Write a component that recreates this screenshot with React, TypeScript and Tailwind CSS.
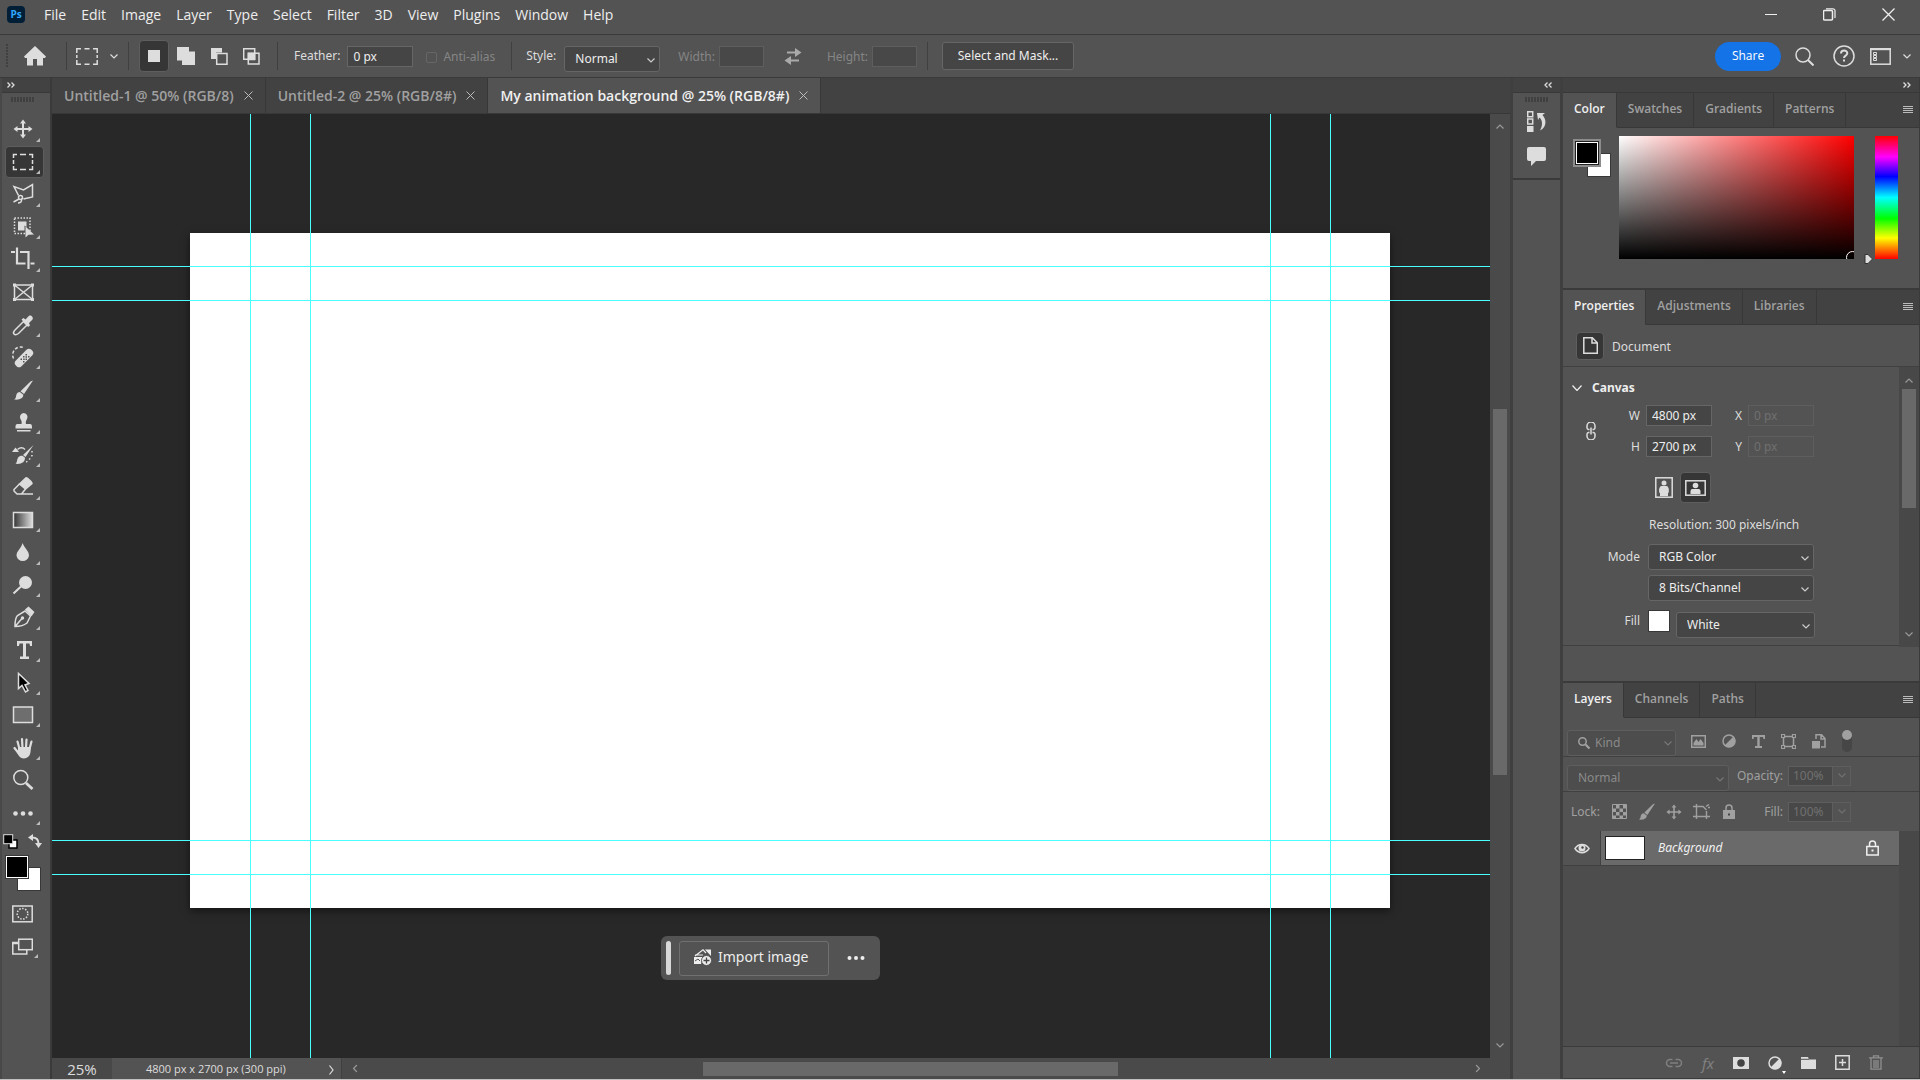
import { useState } from "react";
import type { ReactNode } from "react";

interface IconProps {
    w?: number;
    h?: number;
    className?: string;
    children: ReactNode;
}

const Icon = ({ w = 24, h = 24, className = "", children }: IconProps) => (
    <svg width={w} height={h} viewBox={`0 0 ${w} ${h}`} fill="none" stroke="currentColor" strokeWidth="1.5" aria-hidden="true" className={`shrink-0 ${className}`}>
        {children}
    </svg>
);

const Chevron = ({ className = "" }: { className?: string }) => (
    <Icon w={8} h={5} className={className}>
        <path d="M.5 .5 4 4 7.500 .5" strokeWidth="1.2" />
    </Icon>
);

const moveShape = (
    <g fill="currentColor" stroke="none">
        <path d="M11 5h2v14h-2zM5 11h14v2H5z" />
        <path d="M12 2.500 15 6.500H9zM12 21.500 9 17.500h6zM2.500 12l4-3v6zM21.500 12l-4-3v6z" />
    </g>
);

const brushShape = (
    <g fill="currentColor" stroke="none">
        <path d="M22 2.500 13 16 9.500 13.200 19.500 3.500z" />
        <path d="M8.800 14l3.500 2.800c.2 3.200-3.500 5.500-9.300 4.700 2-1 1.800-2.500 2.300-4.500.4-1.800 2-3 3.500-3z" />
    </g>
);

interface Tool {
    name: string;
    icon: ReactNode;
    more?: boolean;
}

const tools: Tool[] = [
    { name: "Move", more: true, icon: moveShape },
    { name: "Rectangular Marquee", more: true, icon: <path d="M2.500 8V4.500H6M9 4.500h6M18 4.500h3.500V8M21.500 10v4M21.500 16v3.500H18M15 19.500H9M6 19.500H2.500V16M2.500 14v-4" /> },
    {
        name: "Polygonal Lasso", more: true, icon: (
            <>
                <path d="M7.500 13.500 3 4.500 12.500 8 21.500 2.500V15L12.500 17" />
                <circle cx="9.500" cy="15.500" r="2" />
                <path d="M8 17 2.500 20M10 17.500 12 16M10.500 17.500C11 20 9 21 7 21" />
            </>
        )
    },
    {
        name: "Object Selection", more: true, icon: (
            <>
                <rect x="3.500" y="3" width="15.500" height="15.500" strokeDasharray="1.500 1.500" />
                <path d="M7 6.500h8.500V12l-2-1.500v5H7z" fill="currentColor" stroke="none" />
                <path d="M14.500 11.500v11l3-2.700 5.500-.3z" fill="currentColor" stroke="none" />
            </>
        )
    },
    { name: "Crop", more: true, icon: <path d="M0 5h4M9 5h8.500v17M6 .5v16h8.500M19.500 16.500H23.500" strokeWidth="2.200" /> },
    {
        name: "Frame", icon: (
            <>
                <rect x="3.500" y="5" width="18" height="14.500" />
                <path d="m3.500 5 18 14.500M21.500 5l-18 14.500" />
                <path d="M2 3.500h3v3H2zM20 3.500h3v3h-3zM2 18h3v3H2zM20 18h3v3h-3z" fill="currentColor" stroke="none" />
            </>
        )
    },
    {
        name: "Eyedropper", more: true, icon: (
            <>
                <path d="m12.500 8.500 3.500 3.500-8.500 8.500c-1.500 1-3.500 1.500-4.500.5s0-3 1-4z" />
                <path d="m10.500 6.500 2-1.500 2 1.500 3.500-3.700c1.500-1.300 5 1.200 3.500 3.700L18 10l1 2.500-2 1.500z" fill="currentColor" stroke="none" />
            </>
        )
    },
    {
        name: "Spot Healing Brush", more: true, icon: (
            <>
                <path d="M2.500 13.500A8 8 0 0 1 12.500 2.500" strokeDasharray="3 2" />
                <rect x="2" y="9" width="22" height="8" rx="3.500" transform="rotate(-45 13 13)" fill="currentColor" stroke="none" />
                <path d="M9.500 13.500h1.500v1.500h-1.500zM12 16h1.500v1.500H12zM12 11h1.500v1.500H12zM12.200 13.500h1.500v1.500h-1.500zM14.500 13.500h1.500v1.500h-1.500zM14.500 9h1.500v1.500h-1.500zM14.500 11.200h1.500v1.500h-1.500zM17 11h1.500v1.500H17z" fill="#535353" stroke="none" />
            </>
        )
    },
    { name: "Brush", more: true, icon: brushShape },
    {
        name: "Clone Stamp", more: true, icon: (
            <path d="M12.500 3a4 4 0 0 1 3.500 6c-1 1.500-1.500 3-1 5h4c1.500 0 2 1 2 3v1.500H4.500V17c0-2 .5-3 2-3h4c.5-2 0-3.500-1-5a4 4 0 0 1 3-6zM6 20h13.500v1.500H6z" fill="currentColor" stroke="none" />
        )
    },
    {
        name: "History Brush", more: true, icon: (
            <>
                <path d="M22.500 2 14.500 14l-2.500-2zM11.500 12.800l2.500 2c0 4-3 6.700-9.500 6 2-1.500 1-3.500 2.500-6 1-1.700 3-2.200 4.500-2zM4.500 4.500 8 9H1z" fill="currentColor" stroke="none" />
                <path d="M6.500 6.500C9 4.500 12 4.500 14 6.500" />
                <path d="M21 8v4.500L18 17l-4 3" strokeDasharray="1.500 2.500" />
            </>
        )
    },
    {
        name: "Eraser", more: true, icon: (
            <>
                <path d="m8.500 9 6.500-6.200c.8-.6 6.300 4.500 6 5.700L14.500 14z" fill="currentColor" />
                <path d="M8.500 9 3 14.500v1.500l3 3h4.500l4-5M6 19h16" />
            </>
        )
    },
    {
        name: "Gradient", more: true, icon: (
            <>
                <linearGradient id="toolGradient">
                    <stop offset="0" stopColor="#333" />
                    <stop offset="1" stopColor="#ddd" />
                </linearGradient>
                <rect x="2.500" y="4.500" width="19" height="15" fill="url(#toolGradient)" />
            </>
        )
    },
    { name: "Blur", more: true, icon: <path d="M11.500 3c2 5 6.500 8 6.500 12.500a6.300 6.300 0 0 1-12.500 0C5.500 11 10.500 8 11.500 3z" fill="currentColor" stroke="none" /> },
    {
        name: "Dodge", more: true, icon: (
            <>
                <circle cx="14.500" cy="9.500" r="6.500" fill="currentColor" stroke="none" />
                <path d="m2.500 20.500 7.500-7" strokeWidth="2" />
            </>
        )
    },
    {
        name: "Pen", more: true, icon: (
            <>
                <path d="M4 21.500c0-4 .5-9 2.500-11L14 6l5.500 5-3.500 7c-3 2.500-8 3.500-12 3.500zM4 21.500l7-8" />
                <circle cx="11.500" cy="13" r="1.700" fill="currentColor" stroke="none" />
                <path d="M15 4.500 17.500 2.500l5 4.500-2 3z" fill="currentColor" />
            </>
        )
    },
    { name: "Horizontal Type", more: true, icon: <path d="M6 3h15v5h-2l-.5-2.500h-3.500v13h3V21h-9v-2.500h3v-13H8.500L8 8H6z" fill="currentColor" stroke="none" /> },
    { name: "Path Selection", more: true, icon: <path d="M7.500 2.500v15l3.500-3 3.500 6.500 2.500-1.500-3-5.500 4-1.500z" fill="#000" /> },
    { name: "Rectangle", more: true, icon: <rect x="2.500" y="4" width="19" height="15.500" fill="#6e6e6e" /> },
    {
        name: "Hand", more: true, icon: (
            <>
                <path d="M8.500 13 6.500 5.500M11.500 12 11 3M15 12l.5-8.500M18.500 13l2-7.500M7.500 17 3.500 12" strokeWidth="2.200" strokeLinecap="round" />
                <path d="M7 11h12.500c.5 4 .5 11-6.500 11.500C8 22 7.500 19 5 15l2-1z" fill="currentColor" stroke="none" />
            </>
        )
    },
    {
        name: "Zoom", icon: (
            <>
                <circle cx="9.800" cy="9.500" r="7" />
                <path d="m15 15 6.500 6" strokeWidth="2.800" />
            </>
        )
    },
    {
        name: "Edit Toolbar", more: true, icon: (
            <g fill="currentColor" stroke="none">
                <circle cx="4.500" cy="12.500" r="2.300" />
                <circle cx="12" cy="12.500" r="2.300" />
                <circle cx="19.500" cy="12.500" r="2.300" />
            </g>
        )
    },
];

const menus = ["File", "Edit", "Image", "Layer", "Type", "Select", "Filter", "3D", "View", "Plugins", "Window", "Help"];
const documents = ["Untitled-1 @ 50% (RGB/8)", "Untitled-2 @ 25% (RGB/8#)", "My animation background @ 25% (RGB/8#)"];

const Divider = ({ className = "" }: { className?: string }) => <div className={`w-px h-7 bg-[#404040] shrink-0 ${className}`} />;

const Grip = () => (
    <div className="w-6 h-[5px] bg-[repeating-linear-gradient(90deg,#404040_0_2px,#535353_2px_3px)]" />
);

const MoreMark = () => (
    <svg width="4" height="4" viewBox="0 0 4 4" aria-hidden="true" className="absolute right-[3px] bottom-[3px]">
        <path d="M4 0v4H0z" fill="#bbb" />
    </svg>
);

interface SelectProps {
    id: string;
    value: string;
    label: string;
    className?: string;
    disabled?: boolean;
}

const Select = ({ id, value, label, className = "", disabled }: SelectProps) => (
    <div className={`relative ${className}`}>
        <select
            id={id}
            aria-label={label}
            disabled={disabled}
            className={`${disabled ? "bg-[#4d4d4d] border-[#5e5e5e] text-[#8a8a8a]" : "bg-[#454545] border-[#666] text-[#eee]"} appearance-none w-full h-full border rounded-[3px] px-[10px] opacity-100`}>
            <option>{value}</option>
        </select>
        <Chevron className={`${disabled ? "text-[#777]" : "text-[#ccc]"} absolute right-[5px] top-3 pointer-events-none`} />
    </div>
);

const PanelTabs = ({ names }: { names: string[] }) => {
    const [active, setActive] = useState(names[0]);

    return (
        <div className="flex h-[35px] shrink-0 bg-[#424242] font-['Open_Sans',sans-serif] font-semibold text-xs">
            {names.map((name) => (
                <button
                    key={name}
                    onClick={() => setActive(name)}
                    className={`${active === name ? "bg-[#535353] text-[#f0f0f0] border-b-[#535353]" : "text-[#a0a0a0] border-b-[#383838]"} px-[11px] pb-[2px] border-r border-b border-r-[#383838]`}>
                    {name}
                </button>
            ))}
            <div className="flex-1 flex items-center justify-end pr-[6px] border-b border-[#383838]">
                <button aria-label="Panel menu">
                    <Icon w={10} h={8} className="text-[#bbb]">
                        <path d="M0 .5h10M0 2.500h10M0 4.500h10M0 6.500h10" strokeWidth="1" />
                    </Icon>
                </button>
            </div>
        </div>
    );
};

const MenuBar = () => (
    <header className="flex items-center h-[35px] shrink-0 border-b border-[#3a3a3a] pl-[7px] font-['Open_Sans',sans-serif] text-sm text-[#eee]">
        <div className="w-[18px] h-[17px] mb-[5px] rounded-sm bg-[#001e36] text-[#31a8ff] text-[10px] font-bold flex items-center justify-center">Ps</div>
        <nav className="flex gap-[15px] ml-[19px] mb-[5px]">
            {menus.map((menu) => (
                <button key={menu}>{menu}</button>
            ))}
        </nav>
        <div className="flex items-center gap-[46px] ml-auto mr-[25px] mb-[5px]">
            <button aria-label="Minimize"><Icon w={12} h={13}><path d="M0 6.500h12" strokeWidth="1" /></Icon></button>
            <button aria-label="Restore">
                <Icon w={13} h={13}>
                    <rect x=".5" y="2.500" width="9" height="9.500" rx="1" />
                    <path d="M3 .8h7a2 2 0 0 1 2 2V10" strokeWidth="1.200" />
                </Icon>
            </button>
            <button aria-label="Close"><Icon w={13} h={13}><path d="m.5.5 12 12M12.500.5l-12 12" strokeWidth="1.300" /></Icon></button>
        </div>
    </header>
);

const OptionsBar = () => (
    <div className="flex items-center h-[43px] shrink-0 border-b border-[#3a3a3a] text-xs text-[#ddd] pl-[6px] pr-[9px]">
        <div className="w-[2px] h-6 bg-[repeating-linear-gradient(#404040_0_2px,#535353_2px_3px)]" />
        <button aria-label="Home" className="ml-4">
            <Icon w={22} h={20}>
                <path d="M11 0 0 10.500 1 12h2v7.500h6V13h4v6.500h6V12h2l1-1.500z" fill="currentColor" stroke="none" />
            </Icon>
        </button>
        <Divider className="ml-5" />
        <button aria-label="Tool preset" className="flex items-center gap-3 ml-[9px]">
            <Icon w={22} h={17}>
                <path d="M.8 5V.8H5M8.500.8h5M17 .8h4.200V5M21.200 7v3M21.200 12v4.200H17M13.500 16.200h-5M5 16.200H.8V12M.8 10V7" />
            </Icon>
            <Chevron />
        </button>
        <Divider className="ml-[10px]" />
        <div className="flex items-center ml-[10px]">
            <button aria-label="New selection" className="w-[30px] h-8 flex items-center justify-center rounded-sm bg-[#363636] border border-[#5e5e5e]">
                <Icon w={12} h={12}><path d="M0 0h12v12H0z" fill="currentColor" stroke="none" /></Icon>
            </button>
            <button aria-label="Add to selection" className="ml-2">
                <Icon w={18} h={18}><path d="M0 0h12v4.500h6V18H5v-4.500H0z" fill="currentColor" stroke="none" /></Icon>
            </button>
            <button aria-label="Subtract from selection" className="ml-4">
                <Icon w={17} h={17}><path d="M0 0h11v4.500H5V11H0z" fill="currentColor" stroke="none" /><path d="M5.700 5.500H16v10.700H5.700z" /></Icon>
            </button>
            <button aria-label="Intersect with selection" className="ml-[15px]">
                <Icon w={17} h={17}><path d="M.7.7h11v10.600H.7zM5.300 5.300H16V16H5.300z" /><path d="M5.500 5.500h6v6h-6z" fill="currentColor" /></Icon>
            </button>
        </div>
        <Divider className="ml-[17px]" />
        <label htmlFor="feather" className="ml-4">Feather:</label>
        <input id="feather" defaultValue="0 px" className="w-[66px] h-[21px] ml-[7px] px-[5px] bg-[#454545] border border-[#666] text-[#eee]" />
        <label className="flex items-center gap-[6px] ml-[13px] pt-[2px] text-[#858585]">
            <input type="checkbox" disabled className="appearance-none size-[11px] border border-[#666] rounded-xs" />
            Anti-alias
        </label>
        <Divider className="ml-4" />
        <label htmlFor="style" className="ml-[14px]">Style:</label>
        <Select id="style" label="Style" value="Normal" className="w-24 h-[26px] ml-2 mt-[6px]" />
        <label htmlFor="width" className="ml-[18px] pt-[2px] text-[#858585]">Width:</label>
        <input id="width" disabled className="w-[45px] h-[21px] ml-1 bg-[#484848] border border-[#5e5e5e]" />
        <button aria-label="Swap width and height" className="ml-5 text-[#aaa]">
            <Icon w={18} h={17}>
                <path d="M3 4.500h9M6 12.500h9" strokeWidth="2" />
                <path d="m11 0 6.500 4.500L11 9zM7 8 .5 12.500 7 17z" fill="currentColor" stroke="none" />
            </Icon>
        </button>
        <label htmlFor="height" className="ml-[25px] pt-[2px] text-[#858585]">Height:</label>
        <input id="height" disabled className="w-[45px] h-[21px] ml-1 bg-[#484848] border border-[#5e5e5e]" />
        <Divider className="ml-[10px]" />
        <button className="w-[132px] h-7 ml-[14px] rounded-[3px] bg-[#454545] border border-[#666] text-[#eee]">Select and Mask...</button>
        <div className="flex items-center ml-auto">
            <button className="w-[66px] h-[29px] rounded-full bg-[#1473e6] text-white font-['Open_Sans',sans-serif]">Share</button>
            <button aria-label="Search" className="ml-[14px]">
                <Icon w={19} h={19}><circle cx="8" cy="8" r="7" /><path d="m13 13 5.500 5.500" strokeWidth="2" /></Icon>
            </button>
            <button aria-label="Help" className="ml-[19px]">
                <Icon w={22} h={22}>
                    <circle cx="11" cy="11" r="10" />
                    <path d="M8 8.500c0-4 6.300-3.800 6.300-.2C14.300 10.500 11 10.700 11 13" strokeWidth="2" />
                    <path d="M10 14.500h2v2h-2z" fill="currentColor" stroke="none" />
                </Icon>
            </button>
            <button aria-label="Workspace" className="flex items-center gap-3 ml-[15px]">
                <Icon w={21} h={17}>
                    <rect x=".8" y=".8" width="19.400" height="15.400" />
                    <path d="M0 1.200h21" strokeWidth="2" />
                    <path d="M3.500 4.500h3v2h-3zM3.500 7.500h3v2h-3zM3.500 10.500h3v2h-3z" strokeWidth="1" />
                </Icon>
                <Chevron />
            </button>
        </div>
    </div>
);

const DoubleArrow = ({ left }: { left?: boolean }) => (
    <Icon w={8} h={6} className={left ? "rotate-180" : ""}>
        <path d="m.5.5 2.500 2.500L.5 5.500M4.500.5 7 3 4.500 5.500" strokeWidth="1.300" />
    </Icon>
);

const Toolbar = () => {
    const [active, setActive] = useState("Rectangular Marquee");

    return (
        <aside className="flex flex-col w-[52px] shrink-0 border-x-2 border-l-[#484848] border-r-[#3a3a3a]">
            <button aria-label="Expand toolbar" className="h-[15px] pl-[5px] flex items-center bg-[#424242] border-b border-[#383838]">
                <DoubleArrow />
            </button>
            <div className="pt-1 pb-[11px] pl-[9px]"><Grip /></div>
            <div className="flex flex-col h-[716px] pl-[3px]">
                {tools.map((tool) => (
                    <button
                        key={tool.name}
                        aria-label={tool.name}
                        onClick={() => setActive(tool.name)}
                        className={`${active === tool.name ? "bg-[#363636] border-[#5e5e5e]" : "border-transparent"} relative flex-1 w-[39px] pl-[5px] flex items-center border rounded-sm`}>
                        <Icon>{tool.icon}</Icon>
                        {tool.more && <MoreMark />}
                    </button>
                ))}
            </div>
            <div className="flex items-start justify-between pl-[1px] pr-[8px] pt-[5px] h-[26px]">
                <button aria-label="Default colors">
                    <Icon w={15} h={15}>
                        <rect x="6" y="6" width="8" height="8" fill="#fff" stroke="#000" />
                        <rect x=".7" y=".7" width="9" height="9" fill="#000" strokeWidth="1" />
                    </Icon>
                </button>
                <button aria-label="Switch colors">
                    <Icon w={14} h={14}>
                        <path d="M4 3.500c5 0 6.500 2 6.500 6" strokeWidth="2" />
                        <path d="M0 3.500 5 0v7zM7 9h7l-3.500 5z" fill="currentColor" stroke="none" />
                    </Icon>
                </button>
            </div>
            <div className="grid w-[37px] ml-[3px]">
                <button aria-label="Background color" className="[grid-area:1/1] ml-[12px] mt-[12px] size-6 bg-white border border-[#383838]" />
                <button aria-label="Foreground color" className="[grid-area:1/1] size-6 bg-black border border-[#383838] ring-1 ring-inset ring-white" />
            </div>
            <button aria-label="Quick mask" className="ml-[10px] mt-[14px]">
                <Icon w={21} h={18}>
                    <rect x=".8" y="1" width="19.400" height="15.800" />
                    <circle cx="10.500" cy="8.800" r="5.300" strokeDasharray="1.500 1.500" />
                </Icon>
            </button>
            <button aria-label="Screen mode" className="relative w-[29px] pl-[10px] box-content mt-[15px] pb-[6px]">
                <Icon w={21} h={17}>
                    <path d="M6 5H.8v11h14v-4" />
                    <path d="M0 5h6" strokeWidth="2.500" />
                    <rect x="6.700" y="1.200" width="13.600" height="10.500" />
                </Icon>
                <MoreMark />
            </button>
        </aside>
    );
};

const DocumentTabs = () => {
    const [active, setActive] = useState(2);

    return (
        <div className="flex h-9 shrink-0 bg-[#424242] border-b border-[#383838] font-['Open_Sans',sans-serif] text-sm font-semibold">
            {documents.map((doc, i) => (
                <div key={doc} className={`${active === i ? "bg-[#535353] text-[#f0f0f0]" : "text-[#a0a0a0]"} flex items-center gap-[10px] px-3 border-r border-[#383838]`}>
                    <button onClick={() => setActive(i)}>{doc}</button>
                    <button aria-label={`Close ${doc}`}>
                        <Icon w={9} h={9} className="text-[#bbb]"><path d="m.5.5 8 8M8.500.5l-8 8" strokeWidth="1" /></Icon>
                    </button>
                </div>
            ))}
        </div>
    );
};

const Canvas = () => (
    <main className="relative flex-1 bg-[#282828] overflow-hidden">
        <div className="absolute left-[138px] top-[119px] w-[1200px] h-[675px] bg-white shadow-[0_3px_8px_rgba(0,0,0,0.5)]" />
        <div className="absolute inset-y-0 left-[198px] w-px bg-[#4affff]" />
        <div className="absolute inset-y-0 left-[258px] w-px bg-[#4affff]" />
        <div className="absolute inset-y-0 left-[1218px] w-px bg-[#4affff]" />
        <div className="absolute inset-y-0 left-[1278px] w-px bg-[#4affff]" />
        <div className="absolute inset-x-0 top-[152px] h-px bg-[#4affff]" />
        <div className="absolute inset-x-0 top-[186px] h-px bg-[#4affff]" />
        <div className="absolute inset-x-0 top-[726px] h-px bg-[#4affff]" />
        <div className="absolute inset-x-0 top-[760px] h-px bg-[#4affff]" />
        <div className="absolute left-[609px] top-[822px] flex items-center h-11 w-[219px] pl-[5px] rounded-md bg-[#535353] text-[#eee] text-sm">
            <div className="w-[5px] h-[34px] rounded-full bg-[#d8d8d8]" />
            <button className="flex items-center gap-[6px] w-[150px] h-[35px] ml-2 pl-[14px] pb-[2px] rounded-[3px] border border-[#707070]">
                <Icon w={18} h={17}>
                    <path d="M1 7 9 .8 12 4M1 6h8" strokeWidth="1.200" />
                    <path d="M11 .5h6v6.500zM0 8h9l-2 7H0z" fill="currentColor" stroke="none" />
                    <path d="m1 12 3-2 2 2" stroke="#535353" strokeWidth="1" />
                    <circle cx="12.500" cy="11.500" r="5" fill="currentColor" stroke="#535353" strokeWidth="1" />
                    <path d="M12.500 8.500v6M9.500 11.500h6" stroke="#444" strokeWidth="1.300" />
                </Icon>
                Import image
            </button>
            <button aria-label="More options" className="ml-[18px]">
                <Icon w={18} h={4}>
                    <g fill="currentColor" stroke="none">
                        <circle cx="2.500" cy="2" r="2" />
                        <circle cx="9" cy="2" r="2" />
                        <circle cx="15.500" cy="2" r="2" />
                    </g>
                </Icon>
            </button>
        </div>
    </main>
);

const VerticalScroll = () => (
    <div className="flex flex-col items-center w-5 shrink-0 bg-[#4a4a4a] text-[#999] py-[10px]">
        <Chevron className="rotate-180" />
        <div className="flex-1 w-full flex flex-col items-center">
            <div className="flex-[280]" />
            <div className="flex-[366] w-[14px] bg-[#696969]" />
            <div className="flex-[268]" />
        </div>
        <Chevron />
    </div>
);

const StatusBar = () => (
    <footer className="flex h-[21px] shrink-0 bg-[#4a4a4a] text-[#ddd]">
        <div className="w-[60px] bg-[#484848] flex items-center justify-center font-['Open_Sans',sans-serif] text-[15px]">25%</div>
        <button className="w-[230px] bg-[#535353] flex items-center justify-between pl-[34px] pr-[7px] pt-[2px] border-r border-[#404040] font-['Open_Sans',sans-serif] text-[11px]">
            4800 px x 2700 px (300 ppi)
            <Icon w={5} h={10}><path d="m.5.5 3.500 4.500L.5 9.500" strokeWidth="1.200" /></Icon>
        </button>
        <div className="flex-1 flex items-center pl-[9px] pr-[28px] text-[#999]">
            <Chevron className="rotate-90" />
            <div className="flex-1 flex">
                <div className="flex-[343]" />
                <div className="flex-[415] h-[14px] bg-[#696969]" />
                <div className="flex-[355]" />
            </div>
            <Chevron className="-rotate-90" />
        </div>
    </footer>
);

const Dock = () => (
    <aside className="flex flex-col w-[53px] shrink-0 border-x-3 border-[#3f3f3f]">
        <button aria-label="Expand panels" className="h-[15px] pr-2 flex items-center justify-end bg-[#424242] border-b border-[#383838]">
            <DoubleArrow left />
        </button>
        <div className="flex flex-col items-center h-[87px] pt-1 border-b-2 border-[#3a3a3a]">
            <Grip />
            <button aria-label="History" className="mt-[9px]">
                <Icon w={19} h={21}>
                    <path d="M.7.700h5v5h-5zM.7 8h5v5h-5z" />
                    <path d="M0 15h6.500v6H0zM10 2h8l-2.500 2c4.500 5 4 12-2.500 15.500 2.500-5 3-9.500-.5-13L11 9z" fill="currentColor" stroke="none" />
                </Icon>
            </button>
            <button aria-label="Comments" className="mt-[15px]">
                <Icon w={19} h={19}><path d="M2 0h15a2 2 0 0 1 2 2v10a2 2 0 0 1-2 2H9l-5 5v-5H2a2 2 0 0 1-2-2V2a2 2 0 0 1 2-2z" fill="currentColor" stroke="none" /></Icon>
            </button>
        </div>
    </aside>
);

const ColorPanel = () => (
    <section className="shrink-0 border-b-2 border-[#3a3a3a]">
        <PanelTabs names={["Color", "Swatches", "Gradients", "Patterns"]} />
        <div className="flex h-40 pl-[10px] pt-2">
            <div className="grid w-[38px] h-[38px] mt-[3px] shrink-0">
                <button aria-label="Background" className="[grid-area:1/1] ml-[14px] mt-[14px] size-6 bg-white border border-[#383838]" />
                <button aria-label="Foreground" className="[grid-area:1/1] size-7 p-[2px] bg-[#8c8c8c]">
                    <span className="block size-6 border border-[#222] bg-black ring-1 ring-inset ring-white" />
                </button>
            </div>
            <div className="relative flex-1 h-[123px] ml-2 overflow-hidden bg-[linear-gradient(to_top,#000,transparent),linear-gradient(to_right,#fff,#f00)]">
                <div className="absolute -right-[5px] -bottom-[5px] size-[13px] rounded-full border border-white" />
            </div>
            <div className="flex items-end h-[128px] w-[21px] justify-end pr-[2px]">
                <Icon w={9} h={10}><path d="M1 .5h3L8.500 5 4 9.500H1z" fill="#ddd" stroke="#333" strokeWidth="1" /></Icon>
            </div>
            <div className="w-[23px] h-[123px] mr-[21px] bg-[linear-gradient(#f00,#f0f_17%,#00f_33%,#0ff_50%,#0f0_67%,#ff0_83%,#f00)]" />
        </div>
    </section>
);

interface SizeFieldProps {
    id: string;
    label: string;
    value: string;
    disabled?: boolean;
}

const SizeField = ({ id, label, value, disabled }: SizeFieldProps) => (
    <div className="flex items-center">
        <label htmlFor={id} className="w-5 pr-[6px] text-right">{label}</label>
        <input
            id={id}
            defaultValue={value}
            disabled={disabled}
            className={`${disabled ? "border-[#5e5e5e] text-[#707070]" : "bg-[#454545] border-[#666] text-[#eee]"} w-[66px] h-[21px] px-[5px] border`}
        />
    </div>
);

const PropertiesPanel = () => (
    <section className="shrink-0 border-b-2 border-[#3a3a3a]">
        <PanelTabs names={["Properties", "Adjustments", "Libraries"]} />
        <div className="flex items-center gap-2 h-[42px] pl-[13px] border-b border-[#404040]">
            <div className="size-7 flex items-center justify-center bg-[#363636] border border-[#5e5e5e] rounded-sm">
                <Icon w={15} h={17}><path d="M.8.800h8.500l5 5v10.400H.8zM9 1v5h5" /></Icon>
            </div>
            <span className="pt-[3px]">Document</span>
        </div>
        <div className="flex h-[280px]">
            <div className="flex-1 border-b border-[#404040] h-[279px] pt-[13px]">
                <button className="flex items-center gap-[10px] pl-[9px] font-bold text-[#eee]">
                    <Icon w={10} h={6}><path d="m.5.500 4.500 5 4.500-5" strokeWidth="1.200" /></Icon>
                    Canvas
                </button>
                <div className="flex items-center mt-[9px] pl-[23px]">
                    <button aria-label="Link width and height" className="w-10">
                        <Icon w={10} h={18}>
                            <path d="M3.500 7.500H2.500A1.800 1.800 0 0 1 1 6V4a3.200 3.200 0 0 1 8 0v2a1.800 1.800 0 0 1-1.500 1.500H6.500M3.500 10.500H2.500A1.800 1.800 0 0 0 1 12v2a3.200 3.200 0 0 0 8 0v-2a1.800 1.800 0 0 0-1.500-1.500H6.500M5 5.500v7" strokeWidth="1.500" />
                        </Icon>
                    </button>
                    <div className="grid grid-cols-2 gap-x-4 gap-y-[10px]">
                        <SizeField id="doc-w" label="W" value="4800 px" />
                        <SizeField id="doc-x" label="X" value="0 px" disabled />
                        <SizeField id="doc-h" label="H" value="2700 px" />
                        <SizeField id="doc-y" label="Y" value="0 px" disabled />
                    </div>
                </div>
                <div className="flex items-center gap-[7px] pl-[92px] mt-[15px]">
                    <button aria-label="Portrait">
                        <Icon w={18} h={21}>
                            <rect x=".8" y=".8" width="16.400" height="19.400" />
                            <g fill="currentColor" stroke="none">
                                <circle cx="9" cy="6" r="2.500" />
                                <path d="M6 9h6c2.500 2 2 5 1.500 7H13v3H5v-3h-.5C4 14 3.500 11 6 9z" />
                            </g>
                        </Icon>
                    </button>
                    <button aria-label="Landscape" className="w-[31px] h-[31px] flex items-center justify-center bg-[#363636] border border-[#5e5e5e] rounded-sm">
                        <Icon w={21} h={16}>
                            <rect x=".8" y=".8" width="19.400" height="14.400" />
                            <g fill="currentColor" stroke="none">
                                <circle cx="10.500" cy="5.500" r="2.800" />
                                <path d="M5.500 14v-2.500c0-2 1-2.500 2.500-2.500h5c1.500 0 2.500.5 2.500 2.500V14z" />
                            </g>
                        </Icon>
                    </button>
                </div>
                <p className="pl-[86px] mt-[14px]">Resolution: 300 pixels/inch</p>
                <div className="flex items-center mt-[11px]">
                    <label htmlFor="mode" className="w-[77px] text-right">Mode</label>
                    <Select id="mode" label="Mode" value="RGB Color" className="w-[166px] h-[26px] ml-2" />
                </div>
                <Select id="depth" label="Bit depth" value="8 Bits/Channel" className="w-[166px] h-[26px] ml-[85px] mt-[5px]" />
                <div className="flex items-start mt-[9px]">
                    <label htmlFor="fill" className="w-[77px] pt-[3px] text-right">Fill</label>
                    <button aria-label="Fill color" className="size-[22px] ml-2 bg-white border border-[#383838]" />
                    <Select id="fill" label="Fill" value="White" className="w-[139px] h-[26px] ml-[6px] mt-[2px]" />
                </div>
            </div>
            <div className="flex flex-col items-center w-[20px] bg-[#484848] text-[#999] pt-[11px] pb-[10px]">
                <Chevron className="rotate-180" />
                <div className="w-[14px] h-[119px] mt-[6px] mb-auto bg-[#696969]" />
                <Chevron />
            </div>
        </div>
        <div className="h-[34px]" />
    </section>
);

const PercentField = ({ id, label }: { id: string; label: string }) => (
    <div className="flex items-center justify-end gap-[5px]">
        <label htmlFor={id}>{label}</label>
        <div className="flex">
            <input id={id} disabled defaultValue="100%" className="w-[45px] h-5 px-1 border border-[#5e5e5e] bg-[#484848] text-[#707070]" />
            <button aria-label={`${label} slider`} className="w-[18px] h-5 flex items-center justify-center border border-l-0 border-[#5e5e5e] text-[#707070]"><Chevron /></button>
        </div>
    </div>
);

const LayersPanel = () => (
    <section className="flex-1 flex flex-col border-b border-[#3a3a3a] text-[#a0a0a0]">
        <PanelTabs names={["Layers", "Channels", "Paths"]} />
        <div className="flex items-center h-[39px] shrink-0 pl-1 pt-3 border-b border-[#404040]">
            <div className="flex items-center relative">
                <Icon w={12} h={12} className="absolute left-[11px] z-10"><circle cx="4.500" cy="4.500" r="3.700" /><path d="m7.500 7.500 4 4" strokeWidth="2.200" /></Icon>
                <select aria-label="Filter by kind" disabled className="appearance-none w-[109px] h-[26px] pl-[27px] rounded-[3px] border border-[#5e5e5e] bg-[#4d4d4d] text-[#8a8a8a] opacity-100">
                    <option>Kind</option>
                </select>
                <Chevron className="absolute right-1 text-[#777]" />
            </div>
            <div className="flex items-center gap-4 ml-[15px] pb-1">
                <button aria-label="Pixel layers"><Icon w={15} h={13}><path d="M.7.700h13.600v11.600H.7z" /><path d="M2.500 10.500V8l3-4 2 3L9.500 4 12.500 8v2.500z" fill="currentColor" stroke="none" /></Icon></button>
                <button aria-label="Adjustment layers"><Icon w={14} h={14}><circle cx="7" cy="7" r="6" /><path d="M11.500 2.500A6.300 6.300 0 0 1 2.500 11.500z" fill="currentColor" stroke="none" /></Icon></button>
                <button aria-label="Type layers"><Icon w={13} h={13}><path d="M0 0h13v4h-1.500L11 2H7.700v9H10v2H3v-2h2.300V2H2L1.500 4H0z" fill="currentColor" stroke="none" /></Icon></button>
                <button aria-label="Shape layers"><Icon w={15} h={15}><path d="M2.500 2.500h10v10h-10z" /><path d="M.5.500h3v3h-3zM11.500.500h3v3h-3zM.5 11.500h3v3h-3zM11.500 11.500h3v3h-3z" fill="#535353" strokeWidth="1.200" /></Icon></button>
                <button aria-label="Smart objects"><Icon w={14} h={15}><path d="M4 5V.700h5.500L13 4.500V13H9M9 1v4h4" /><path d="M0 7h8v7.500H0z" fill="currentColor" stroke="none" /></Icon></button>
                <button aria-label="Toggle layer filter" className="flex items-start w-[10px] h-[22px] rounded-full bg-[#464646]"><span className="size-[10px] rounded-full bg-[#a0a0a0]" /></button>
            </div>
        </div>
        <div className="flex items-center h-[35px] shrink-0 pl-1 pt-[7px] border-b border-[#404040]">
            <Select id="blend" label="Blend mode" value="Normal" disabled className="w-[162px] h-[26px]" />
            <div className="w-[122px] pb-1"><PercentField id="opacity" label="Opacity:" /></div>
        </div>
        <div className="flex items-center h-[39px] shrink-0 pl-2">
            <span className="w-[43px]">Lock:</span>
            <div className="flex items-center gap-[11px]">
                <button aria-label="Lock transparent pixels"><Icon w={15} h={15}><path d="M.5.500h14v14H.5z" strokeWidth="1" /><path d="M4 1h3.500v3.500H4zM11 1h3.500v3.500H11zM.5 4.500H4V8H.5zM7.500 4.500H11V8H7.500zM4 8h3.500v3.500H4zM11 8h3.500v3.500H11zM.5 11.500H4V15H.5zM7.500 11.500H11V15H7.500z" fill="currentColor" stroke="none" /></Icon></button>
                <button aria-label="Lock image pixels"><svg width="17" height="17" viewBox="2 2 20 20" aria-hidden="true">{brushShape}</svg></button>
                <button aria-label="Lock position"><svg width="16" height="16" viewBox="2 2 20 20" aria-hidden="true">{moveShape}</svg></button>
                <button aria-label="Lock artboard nesting"><Icon w={17} h={15}><path d="M3.500 0v15M13.500 7v8M0 2.500h10L13.500 6M0 12.500h17M13 2.500l3-2M15 3.500h2" strokeWidth="1.400" /></Icon></button>
                <button aria-label="Lock all"><Icon w={12} h={15} className="ml-[2px]"><path d="M3 7V4a3 3 0 0 1 6 0v3" /><path d="M0 6h12v9H0z" fill="currentColor" stroke="none" /><path d="M5 9.500h2v2H5z" fill="#444" stroke="none" /></Icon></button>
            </div>
            <div className="ml-auto w-[122px] mr-[68px]"><PercentField id="fill-opacity" label="Fill:" /></div>
        </div>
        <div className="flex-1 flex bg-[#4d4d4d]">
            <div className="flex-1">
                <div className="flex h-[35px] border-b border-[#404040]">
                    <button aria-label="Layer visibility" className="w-[38px] flex items-center justify-center bg-[#535353] border-r border-[#404040] text-[#ddd]">
                        <Icon w={16} h={11}>
                            <path d="M1 5.500C4.500 0 11.500 0 15 5.500 11.500 11 4.500 11 1 5.500z" />
                            <circle cx="8" cy="5" r="3.500" fill="currentColor" stroke="none" />
                            <circle cx="8.500" cy="4.500" r="1.200" fill="#444" stroke="none" />
                        </Icon>
                    </button>
                    <div className="flex-1 flex items-center pl-1 pr-5 bg-[#6a6a6a] text-[#f0f0f0]">
                        <div className="w-10 h-6 bg-white border border-[#222]" />
                        <span className="ml-[13px] italic">Background</span>
                        <Icon w={13} h={16} className="ml-auto"><path d="M3.500 6V4a3 3 0 0 1 6 0v2M.8 6.500h11.400v8.500H.8z" /><path d="M5.500 9.500h2v2h-2z" fill="currentColor" stroke="none" /></Icon>
                    </div>
                </div>
            </div>
            <div className="w-5 bg-[#484848]" />
        </div>
        <div className="flex items-center justify-end gap-[19px] h-8 shrink-0 pr-9 border-t border-[#3a3a3a] text-[#ddd]">
            <button aria-label="Link layers" className="text-[#808080]"><Icon w={18} h={10}><path d="M7.500 1.500H5a3.500 3.500 0 0 0 0 7h2.500M10.500 1.500H13a3.500 3.500 0 0 1 0 7h-2.500M5 5h8" /></Icon></button>
            <button aria-label="Layer style" className="text-[#808080] italic text-[15px] leading-5">fx</button>
            <button aria-label="Add mask"><Icon w={16} h={12}><path d="M0 0h16v12H0z" fill="currentColor" stroke="none" /><circle cx="8" cy="6" r="3.800" fill="#444" stroke="none" /></Icon></button>
            <button aria-label="New adjustment layer" className="relative">
                <Icon w={14} h={14}><circle cx="7" cy="7" r="6" /><path d="M11.500 2.500A6.300 6.300 0 0 1 2.500 11.500z" fill="currentColor" stroke="none" /></Icon>
                <svg width="4" height="3" viewBox="0 0 4 3" aria-hidden="true" className="absolute -right-1 -bottom-1"><path d="M0 0h4L2 3z" fill="#fff" /></svg>
            </button>
            <button aria-label="New group"><Icon w={15} h={12}><path d="M0 0h7l1 2.500h7V12H0z" fill="currentColor" stroke="none" /><path d="M0 2.300h8" stroke="#535353" strokeWidth="1" /></Icon></button>
            <button aria-label="New layer"><Icon w={15} h={15}><path d="M.8.800h13.400v13.400H.8zM7.500 4v7M4 7.500h7" /></Icon></button>
            <button aria-label="Delete layer" className="text-[#909090]"><Icon w={14} h={15}><path d="M0 2.800h14M4.500 2.500V.800h5v1.700M2 3v11.200h10V3M5 5v8M7 5v8M9 5v8" strokeWidth="1.300" /></Icon></button>
        </div>
    </section>
);

const App = () => {
    return (
        <div className="flex flex-col h-screen min-h-[1000px] bg-[#535353] text-[#ddd] text-xs font-['Noto_Sans',sans-serif] border-b border-[#c0c0c0]">
            <MenuBar />
            <OptionsBar />
            <div className="flex flex-1 min-h-0">
                <Toolbar />
                <div className="flex flex-col flex-1 min-w-0">
                    <DocumentTabs />
                    <div className="flex flex-1 min-h-0">
                        <Canvas />
                        <VerticalScroll />
                    </div>
                    <StatusBar />
                </div>
                <Dock />
                <div className="flex flex-col w-[357px] shrink-0 border-r border-[#3a3a3a]">
                    <button aria-label="Collapse panels" className="h-[15px] shrink-0 pr-2 flex items-center justify-end bg-[#424242] border-b border-[#383838]">
                        <DoubleArrow />
                    </button>
                    <ColorPanel />
                    <PropertiesPanel />
                    <LayersPanel />
                </div>
            </div>
        </div>
    );
};

export default App;
